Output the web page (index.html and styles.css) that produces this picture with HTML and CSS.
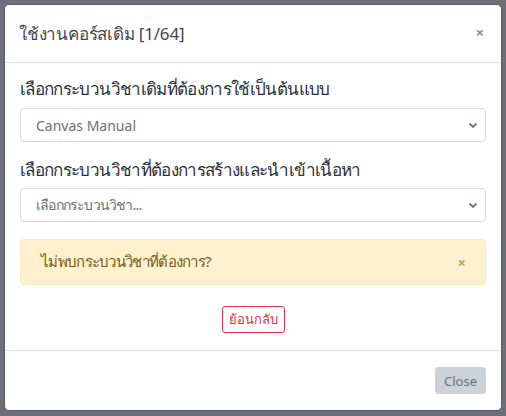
FILE: index.html
```html
<!DOCTYPE html>
<html lang="th">
<head>
<meta charset="UTF-8">
<title>ใช้งานคอร์สเดิม</title>
<link rel="stylesheet" href="styles.css">
</head>
<body>

<div class="modal">
	<div class="modal-header">
		<h5 class="modal-title">ใช้งานคอร์สเดิม [1/64]</h5>
		<span class="close">&times;</span>
	</div>
	<div class="modal-body">
		<label class="lbl">เลือกกระบวนวิชาเดิมที่ต้องการใช้เป็นต้นแบบ</label>
		<div class="select">
			<span>Canvas Manual</span>
			<svg width="10" height="7" viewBox="0 0 10 7"><path d="M1.5 1.5l3.5 3.5 3.5-3.5" fill="none" stroke="#6b7280" stroke-width="1.8"/></svg>
		</div>
		<label class="lbl second">เลือกกระบวนวิชาที่ต้องการสร้างและนำเข้าเนื้อหา</label>
		<div class="select">
			<span class="thai">เลือกกระบวนวิชา...</span>
			<svg width="10" height="7" viewBox="0 0 10 7"><path d="M1.5 1.5l3.5 3.5 3.5-3.5" fill="none" stroke="#6b7280" stroke-width="1.8"/></svg>
		</div>
		<div class="alert">
			<span>ไม่พบกระบวนวิชาที่ต้องการ?</span>
			<span class="alert-x">&times;</span>
		</div>
		<div class="center">
			<button class="btn-back">ย้อนกลับ</button>
		</div>
	</div>
	<div class="modal-footer">
		<button class="btn-close">Close</button>
	</div>
</div>

</body>
</html>
```

FILE: styles.css
```css
*{ margin:0; padding:0; box-sizing:border-box; }
body{
	background:#6e6e7a;
	font-family:"Noto Sans", "Liberation Sans", sans-serif;
	padding:4px;
	height:416px;
}
.modal{
	background:#fff;
	border:1px solid #5a5a66;
	border-radius:5px;
	width:498px;
	height:407px;
	display:flex;
	flex-direction:column;
}
.modal-header{
	height:58px;
	padding:0 17px 0 14px;
	border-bottom:1px solid #dee2e6;
	display:flex;
	align-items:center;
	justify-content:space-between;
}
.modal-title{
	font-weight:normal;
	font-size:17px;
	letter-spacing:-0.2px;
	color:#3f4752;
}
.close{
	color:#8a8f98;
	font-size:15px;
	font-weight:bold;
	margin-top:-4px;
}
.modal-body{
	padding:14px 15px 17px;
	border-bottom:1px solid #dee2e6;
}
.lbl{
	display:block;
	font-size:17px;
	line-height:24px;
	letter-spacing:-0.65px;
	color:#2c3038;
	margin-bottom:7px;
}
.lbl.second{
	margin-top:16px;
	margin-bottom:6px;
}
.select{
	height:34px;
	border:1px solid #d6dae0;
	border-radius:4px;
	padding:0 7px 0 15px;
	display:flex;
	align-items:center;
	justify-content:space-between;
	font-size:14px;
	color:#6b7079;
}
.select .thai{
	letter-spacing:-0.8px;
}
.alert{
	margin-top:17px;
	height:46px;
	background:#fff0cf;
	border:1px solid #fde9bb;
	border-radius:4px;
	padding:0 20px 0 20px;
	display:flex;
	align-items:center;
	justify-content:space-between;
	font-size:15px;
	letter-spacing:-0.7px;
	color:#7a5a12;
}
.alert-x{
	color:#b0a07a;
	font-weight:bold;
	font-size:14px;
}
.center{
	margin-top:21px;
	text-align:center;
}
.btn-back{
	height:27px;
	width:63px;
	background:#fff;
	border:1px solid #dc3545;
	border-radius:3px;
	color:#dc3545;
	font-family:inherit;
	font-size:13px;
}
.modal-footer{
	flex:1;
	display:flex;
	justify-content:flex-end;
	align-items:flex-start;
	padding:16px 15px;
}
.btn-close{
	width:51px;
	height:27px;
	background:#cdd1d8;
	border:none;
	border-radius:4px;
	color:#6b7280;
	font-family:inherit;
	font-size:13px;
}
```
